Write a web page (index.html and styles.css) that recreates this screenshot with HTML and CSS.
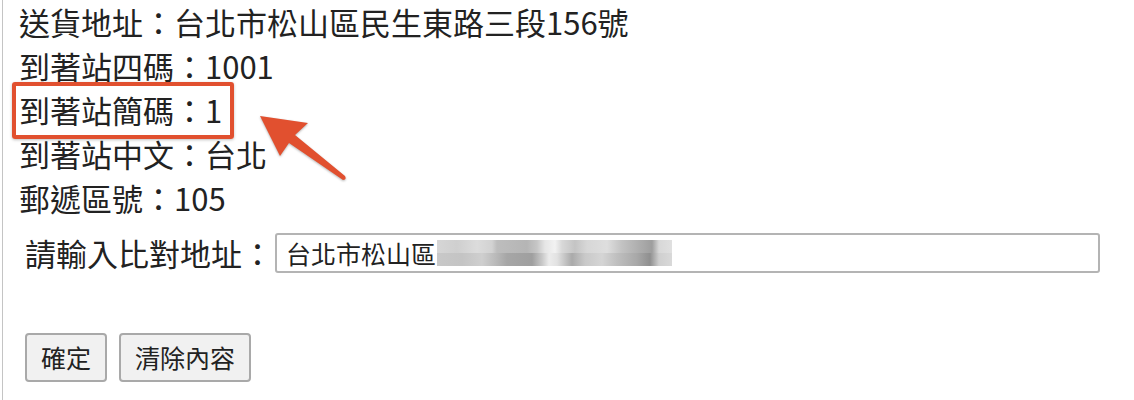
FILE: index.html
```html
<!DOCTYPE html>
<html lang="zh-Hant">
<head>
<meta charset="utf-8">
<title>比對地址</title>
<link rel="stylesheet" href="styles.css">
</head>
<body>
<div class="page">
  <div class="info">
    <div class="line">送貨地址：台北市松山區民生東路三段156號</div>
    <div class="line">到著站四碼：1001</div>
    <div class="line"><span class="mark">到著站簡碼：1</span></div>
    <div class="line">到著站中文：台北</div>
    <div class="line">郵遞區號：105</div>
  </div>
  <div class="compare">
    <label class="compare-label" for="addr">請輸入比對地址：</label>
    <div class="input-box" id="addr">台北市松山區<span class="blur"><span class="blur-row top"></span><span class="blur-row bottom"></span></span></div>
  </div>
  <div class="actions">
    <button class="btn" type="button">確定</button>
    <button class="btn" type="button">清除內容</button>
  </div>
  <svg class="arrow" width="110" height="90" viewBox="0 0 110 90" aria-hidden="true">
    <path d="M7 18 L55 25 L42 37 L92 78 Q94 82 90 82 L36 45 L27 58 Z" fill="#e1502f"/>
  </svg>
</div>
</body>
</html>
```

FILE: styles.css
```css
html, body {
  margin: 0;
  padding: 0;
  background: #ffffff;
}

body {
  font-family: "Noto Sans CJK TC", "Noto Sans", sans-serif;
  color: #222222;
}

.page {
  position: relative;
  margin-left: 2px;
  border-left: 1px solid #c4c4c4;
  height: 400px;
  box-sizing: border-box;
  padding-top: 0;
}

.info {
  display: flex;
  flex-direction: column;
  padding-left: 16px;
}

.line {
  font-size: 31px;
  line-height: 44px;
  height: 44px;
  white-space: nowrap;
}

.mark {
  position: relative;
}

.mark::before {
  content: "";
  position: absolute;
  left: -7px;
  top: -5px;
  width: 214px;
  height: 49px;
  border: 4px solid #e1502f;
  border-radius: 3px;
  box-shadow: 0 1px 3px rgba(0, 0, 0, 0.25);
}

.compare {
  display: flex;
  align-items: center;
  padding-left: 22px;
  margin-top: 13px;
}

.compare-label {
  font-size: 31px;
  line-height: 40px;
  white-space: nowrap;
  width: 250px;
}

.input-box {
  display: flex;
  align-items: center;
  width: 825px;
  height: 40px;
  box-sizing: border-box;
  border: 2px solid #b4b4b4;
  border-radius: 3px;
  padding-left: 9px;
  font-size: 25px;
  color: #222222;
  white-space: nowrap;
}

.blur {
  display: flex;
  flex-direction: column;
  width: 235px;
  height: 26px;
  margin-left: 1px;
}

.blur-row {
  flex: 1;
}

.blur-row.top {
  background: linear-gradient(to right,
    #d6d6d6 0, #cfcfcf 20px, #dcdcdc 40px, #d2d2d2 55px,
    #bdbdbd 60px, #b5b5b5 90px, #c6c6c6 100px, #e6e6e6 108px,
    #f2f2f2 118px, #d8d8d8 125px, #c4c4c4 138px, #d7d7d7 150px,
    #dedede 170px, #c2c2c2 185px, #9e9e9e 215px, #d8d8d8 222px, #e0e0e0 235px);
}

.blur-row.bottom {
  background: linear-gradient(to right,
    #c8c8c8 0, #c4c4c4 25px, #cfcfcf 45px, #bbbbbb 58px,
    #a6a6a6 70px, #9f9f9f 95px, #c8c8c8 105px, #ececec 112px,
    #e2e2e2 120px, #aaaaaa 135px, #c9c9c9 148px, #d5d5d5 165px,
    #bfbfbf 180px, #a8a8a8 200px, #8f8f8f 213px, #cfcfcf 222px, #d9d9d9 235px);
}

.actions {
  display: flex;
  gap: 12px;
  padding-left: 22px;
  margin-top: 60px;
}

.btn {
  font-family: "Noto Sans CJK TC", "Noto Sans", sans-serif;
  font-size: 25px;
  color: #222222;
  height: 49px;
  padding: 0 14px;
  background: #f1f1f1;
  border: 2px solid #a9a9a9;
  border-radius: 4px;
  line-height: 1;
}

.arrow {
  position: absolute;
  left: 250px;
  top: 98px;
  filter: drop-shadow(0 1px 1px rgba(0, 0, 0, 0.3));
}
```
